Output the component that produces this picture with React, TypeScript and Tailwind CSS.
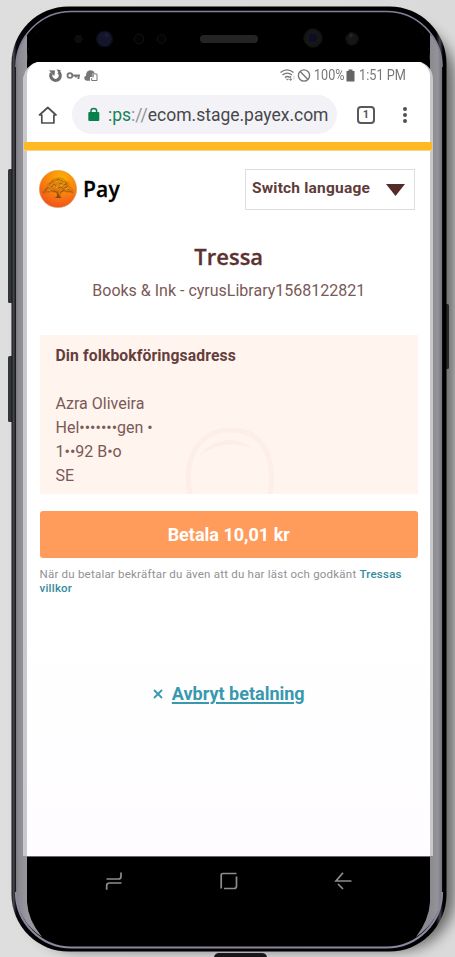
import React from "react";

const PhoneBody = () => (
  <svg
    className="pointer-events-none absolute inset-0"
    width="455"
    height="957"
    viewBox="0 0 455 957"
    aria-hidden="true"
  >
    <defs>
      <linearGradient id="backdrop" x1="0" x2="1" y1="0" y2="0">
        <stop offset="0" stopColor="#dedede" />
        <stop offset="1" stopColor="#dadada" />
      </linearGradient>
      <linearGradient id="metal" gradientUnits="userSpaceOnUse" x1="11" x2="447" y1="0" y2="0">
        <stop offset="0" stopColor="#08080a" />
        <stop offset="0.006" stopColor="#45474c" />
        <stop offset="0.012" stopColor="#0b0b0f" />
        <stop offset="0.04" stopColor="#000" />
        <stop offset="0.975" stopColor="#000" />
        <stop offset="0.984" stopColor="#45434f" />
        <stop offset="0.991" stopColor="#000" />
        <stop offset="1" stopColor="#000" />
      </linearGradient>
      <linearGradient id="side-left" gradientUnits="userSpaceOnUse" x1="15" x2="27" y1="0" y2="0">
        <stop offset="0" stopColor="#74727a" />
        <stop offset="0.3" stopColor="#8b8a90" />
        <stop offset="1" stopColor="#98979d" />
      </linearGradient>
      <linearGradient id="side-right" gradientUnits="userSpaceOnUse" x1="430" x2="443" y1="0" y2="0">
        <stop offset="0" stopColor="#8b8a90" />
        <stop offset="0.6" stopColor="#949398" />
        <stop offset="1" stopColor="#6d6b78" />
      </linearGradient>
      <filter id="shade" x="-20%" y="-10%" width="140%" height="120%">
        <feGaussianBlur stdDeviation="7" />
      </filter>
      <filter id="lens" x="-50%" y="-50%" width="200%" height="200%">
        <feGaussianBlur stdDeviation="0.8" />
      </filter>
    </defs>
    <rect width="455" height="957" fill="url(#backdrop)" />
    <rect x="24" y="24" width="431" height="926" rx="55" fill="#000" opacity="0.52" filter="url(#shade)" />
    <rect x="8" y="169" width="6" height="134" rx="1.5" fill="#343536" />
    <rect x="8" y="356" width="6" height="66" rx="1.5" fill="#343536" />
    <rect x="444" y="304" width="5" height="65" rx="1.5" fill="#29292c" />
    <path d="M214 957q1-4 5-4h43q4 0 5 4z" fill="#19161a" />
    <rect x="11.5" y="6.5" width="435" height="945" rx="57" fill="url(#metal)" />
    <path d="M16 67A55 55 0 0 1 37 24V30Q27 42 27 62V902Q28 920 42 937Q17 920 16 892Z" fill="url(#side-left)" />
    <path d="M442 67A55 55 0 0 0 421 24V30Q430 42 430 62V902Q429 920 416 937Q441 920 442 892Z" fill="url(#side-right)" />
    <path d="M25 37A55 55 0 0 1 42 20L50 18Q43 25 36 32Q29 42 27 58V34Z" fill="#000" />
    <path d="M433 37A55 55 0 0 0 416 20L408 18Q415 25 422 32Q428 42 430 58V34Z" fill="#000" />
    <path d="M16 67A55.500 55.500 0 0 1 71.500 11.500H386.500A55.500 55.500 0 0 1 442 67" fill="none" stroke="#857f98" strokeWidth="1.600" />
    <path d="M16 892A55.500 55.500 0 0 0 71.500 947.500H386.500A55.500 55.500 0 0 0 442 892" fill="none" stroke="#8d87a0" strokeWidth="2.200" />
    <path d="M23 856V78Q26 65 37 62H421Q433 67 433 80V856Z" fill="#c9c8cd" />
    <path d="M27 856V74Q29 64 38 62H420Q430 67 430 76V856Z" fill="#fff" />
    <path d="M430 293q-2 1-2 4v163q0 2 2 3" fill="#f5f5f6" stroke="#dcdce0" strokeWidth=".8" />
    <g filter="url(#lens)">
      <circle cx="78.5" cy="39" r="4" fill="#111" />
      <circle cx="104.500" cy="39" r="8" fill="#14132a" />
      <circle cx="107" cy="35" r="2" fill="#242346" />
      <circle cx="313" cy="38" r="8.500" fill="#151517" stroke="#242426" />
      <circle cx="313" cy="38" r="4.500" fill="#111128" />
      <circle cx="352" cy="39" r="6.500" fill="#151516" />
      <circle cx="351" cy="35" r="1.500" fill="#303035" />
    </g>
    <circle cx="139" cy="39" r="4.8" fill="#030303" stroke="#131313" />
    <circle cx="161.500" cy="39" r="4.300" fill="#030303" stroke="#131313" />
    <rect x="200" y="35" width="58" height="8" rx="4" fill="#242424" />
  </svg>
);

const StatusBar = () => (
  <div className="flex h-[25px] items-center justify-between pl-[22px] pr-[22px] text-[#77777a]">
    <svg width="50" height="14" viewBox="0 0 50 14" fill="none">
      <path d="M2.500 4.200A4.700 4.700 0 1 0 9.500 3" stroke="#6d6d70" strokeWidth="3.200" />
      <path d="M0 1.300L6 1.500 5.400 7z" fill="#6d6d70" />
      <path d="M7.500 .4L11.700 1 10.500 5z" fill="#6d6d70" />
      <circle cx="20.900" cy="6.500" r="2.400" stroke="currentColor" strokeWidth="1.800" />
      <path d="M23 6.500H31M29.500 6v4M26.800 6v2.500" stroke="currentColor" strokeWidth="1.900" />
      <path d="M37.500 11.800Q35.200 11.300 35.200 9Q35.300 7.300 37 6.800Q37 1.300 41.300 1.200Q45 1.300 45.500 4.200H43.500V8H41V11.800Z" fill="currentColor" />
      <path d="M42.700 9V11.500H48V5.200L46 4.800H44.200V8.500" stroke="currentColor" strokeWidth="1" />
    </svg>
    <div className="flex items-center">
      <svg className="mr-[1px]" width="34" height="15" viewBox="0 0 34 15" fill="none" stroke="currentColor">
        <path d="M1.500 4.500Q8-.8 14.500 4.500M3.500 7Q8.300 3.300 13 7M5.800 9.500Q8.500 7.500 11 9.500" strokeWidth="1.400" />
        <path d="M7.200 10.700L8.500 12 9.700 10.900" fill="currentColor" strokeWidth=".8" />
        <path d="M11.700 8v4M10.400 11l1.300 1.500L13 11" strokeWidth=".9" />
        <path d="M15 7.500v4" strokeWidth=".7" opacity=".5" />
        <circle cx="25" cy="7.500" r="5.600" strokeWidth="1.400" />
        <path d="M21.200 3.600L28.900 11.400" strokeWidth="1.400" />
      </svg>
      <span className="w-[31px] origin-left scale-x-[.9] whitespace-nowrap text-[14px]">100%</span>
      <svg className="ml-[1px]" width="9" height="13" viewBox="0 0 9 13">
        <path d="M.5 2H2.500V.5H6.500V2H8.500V12.500H.5Z" fill="#656567" />
      </svg>
      <span className="ml-[4px] w-[49px] origin-left scale-x-[.91] whitespace-nowrap text-[14px]">1:51 PM</span>
    </div>
  </div>
);

const BrowserBar = () => (
  <div className="flex h-[54px] items-center pb-[1px] pl-[11px]">
    <svg width="20" height="20" viewBox="0 0 20 20" fill="none" stroke="#4e4f54" strokeWidth="1.700">
      <path d="M3.800 10H1.500L9.800 2.500 18 10H15.900V18H3.800V10Z" strokeLinejoin="round" />
    </svg>
    <div className="ml-[14px] flex h-[39px] w-[265px] items-center rounded-full bg-[#f2f2f7] pl-[16px]">
      <svg width="12" height="15" viewBox="0 0 12 15" fill="none">
        <rect x=".3" y="5" width="11" height="9" rx="1" fill="#08804c" />
        <path d="M3 6V3.800Q3 1.400 5.800 1.400T8.600 3.800V6" stroke="#08804c" strokeWidth="1.500" />
      </svg>
      <div className="ml-[8px] w-[222px] whitespace-nowrap text-[17.500px] leading-5 tracking-[-0.010px] text-[#47484b]">
        <span className="text-[#168457]">:ps</span>
        <span className="text-[#929397]">://</span>ecom.stage.payex.com
      </div>
    </div>
    <div className="ml-[20px] flex h-[18px] w-[18px] items-center justify-center rounded-[4px] border-2 border-[#58595d] text-[11px] font-bold leading-none text-[#55565a]">1</div>
    <div className="ml-[28px] flex flex-col gap-[2px]">
      <i className="h-[4px] w-[4px] rounded-full bg-[#505155]" />
      <i className="h-[4px] w-[4px] rounded-full bg-[#505155]" />
      <i className="h-[4px] w-[4px] rounded-full bg-[#505155]" />
    </div>
  </div>
);

const OakLogo = () => (
  <svg width="38" height="38" viewBox="0 0 38 38" fill="none">
    <defs>
      <radialGradient id="oak-disc" cx=".6" cy=".2" r=".8">
        <stop stopColor="#ffb000" />
        <stop offset=".5" stopColor="#fb870c" />
        <stop offset="1" stopColor="#f0541c" />
      </radialGradient>
    </defs>
    <circle cx="19" cy="19" r="18.600" fill="url(#oak-disc)" stroke="#d99b56" strokeWidth=".6" />
    <path d="M3 23l1-3 3-2 1-4 3-2 2-3 4-1 3-1 4 1 3 3 3 1 1 4 3 3 1 3-4 1-5-1-4 1-2 0 0 3 3 2H15l3-2-1-3-4-1-4 1-3 1Z" fill="#b0610f" opacity=".38" />
    <path d="M4 23l3-3 2 2 3-2 2 2 3-1 2 3M6 19l3-1 2-3 2 2 2-3 2 2M10 14l2-1 2-2 2 1 2-3 3 1M22 10l2 2 2-1 2 3M20 14l2-1 2 2 3-1 2 3M19 18l3-1 2 2 3-2 3 3M22 22l3-2 3 2 3-1 3 2M19 28v-7M21 28l0-5 4-3M18 23l-4-3" stroke="#7e470c" strokeWidth="1" opacity=".55" />
    <path d="M15.500 28l2-1 1.500-4 2 4 2 1Z" fill="#7b4210" opacity=".8" />
    <path d="M9 17l4-2M15 12l3-1M21 16l4-2M26 19l4-1M8 21l4-1M17 18l2-2M24 11l2 1M14 16l2 1" stroke="#ffd15a" strokeWidth=".8" opacity=".55" />
  </svg>
);

const PageHeader = () => (
  <header className="flex items-start justify-between pr-[3px]">
    <div className="-ml-[.5px] mt-[1px] flex items-center">
      <OakLogo />
      <span className="ml-[6px] font-['Open_Sans',sans-serif] text-[21px] font-semibold leading-[38px] tracking-[0.2px] text-black [-webkit-text-stroke:.3px_black]">Pay</span>
    </div>
    <button className="flex h-[41px] w-[170px] items-center justify-between border border-[#dededf] pl-[6px] pr-[8px] text-[15.500px] font-bold text-[#603c3a]">
      <span className="whitespace-nowrap pb-[2px] tracking-[0.2px]">Switch language</span>
      <svg width="20" height="12" viewBox="0 0 20 12"><path d="M0 0H19L9.500 12Z" fill="#542b27" /></svg>
    </button>
  </header>
);

const BillingCard = () => (
  <section className="relative mt-[34px] h-[159px] overflow-hidden bg-[#fff4ee] pl-[16px] pt-[9px] text-[16px] leading-[24px] text-[#7a5957]">
    <svg className="absolute left-[144px] top-[84px]" width="92" height="75" viewBox="0 0 92 75" fill="none">
      <path d="M6 75Q0 44 14 26Q26 11 46 11Q68 11 79 26Q91 44 86 75" stroke="#fbe9df" strokeWidth="5" opacity=".45" />
      <path d="M16 37Q26 22 46 21Q61 22 67 29Q49 23 35 27Q23 30 16 37" fill="#fae7dd" opacity=".5" />
    </svg>
    <div className="relative">
      <h2 className="mb-[24px] text-[15.700px] font-bold tracking-[0.110px] text-[#643f3d]">Din folkbokföringsadress</h2>
      <p>Azra Oliveira</p>
      <p>Hel•••••••gen •</p>
      <p>1••92 B•o</p>
      <p>SE</p>
    </div>
  </section>
);

const NavigationBar = () => (
  <nav className="flex h-[48px] items-center justify-between border-t border-[#686868] pl-[77px] pr-[77px]">
    <svg width="20" height="20" viewBox="0 0 20 20" fill="none" stroke="#8d8d8d" strokeWidth="1.700">
      <path d="M2.500 8H14.500Q17 8 17 5.500V1.500M17.500 12H5.500Q2.700 12 2.700 14.500V18.700" />
    </svg>
    <svg width="20" height="20" viewBox="0 0 20 20" fill="none" stroke="#8d8d8d" strokeWidth="1.700">
      <path d="M2.200 17.500V4Q2.200 2.500 4 2.500H17.500M17.500 5.500V15Q17.500 17.500 15 17.500H5" />
    </svg>
    <svg width="20" height="20" viewBox="0 0 20 20" fill="none" stroke="#8d8d8d" strokeWidth="1.700">
      <path d="M10 1.800L3 10H18.500M5 13L10 18" />
    </svg>
  </nav>
);

export default function App() {
  return (
    <div className="relative h-[957px] w-[455px] overflow-hidden bg-[#dcdcdc] font-[Roboto,sans-serif]">
      <PhoneBody />
      <main className="relative ml-[27px] flex w-[403px] flex-col pt-[63px]">
        <StatusBar />
        <BrowserBar />
        <div className="-ml-[3px] h-[9px] w-[408px] border-b border-[#f7d782] bg-[#feb925]" />
        <div className="flex h-[705px] flex-col bg-gradient-to-b from-white from-65% to-[#fefcff] pl-[12.500px] pr-[12px] pt-[18px]">
          <PageHeader />
          <h1 className="mt-[31px] text-center font-['Open_Sans',sans-serif] text-[22px] font-semibold leading-[30px] tracking-[0px] text-[#5c3230] [-webkit-text-stroke:.3px_#5c3230]">Tressa</h1>
          <p className="mt-[10px] text-center text-[16px] leading-[20px] text-[#7a5957]">Books &amp; Ink - cyrusLibrary1568122821</p>
          <BillingCard />
          <button className="mt-[17px] h-[47px] rounded-[3px] bg-[#ff9c5b] text-[18px] font-bold text-white">Betala 10,01 kr</button>
          <p className="mt-[9px] whitespace-nowrap text-[11.500px] leading-[14px] tracking-[0.220px] text-[#929094]">
            När du betalar bekräftar du även att du har läst och godkänt <a className="font-medium text-[#368a9d]">Tressas<br />villkor</a>
          </p>
          <div className="mt-[86px] flex items-center justify-center text-[#3899ae]">
            <svg className="mr-[9px]" width="10" height="10" viewBox="0 0 10 10" stroke="currentColor" strokeWidth="1.800"><path d="M1 1L9 9M9 1L1 9" /></svg>
            <a className="text-[18px] font-bold leading-[26px] underline decoration-[1.500px] underline-offset-[2px]">Avbryt betalning</a>
          </div>
        </div>
        <NavigationBar />
      </main>
    </div>
  );
}
